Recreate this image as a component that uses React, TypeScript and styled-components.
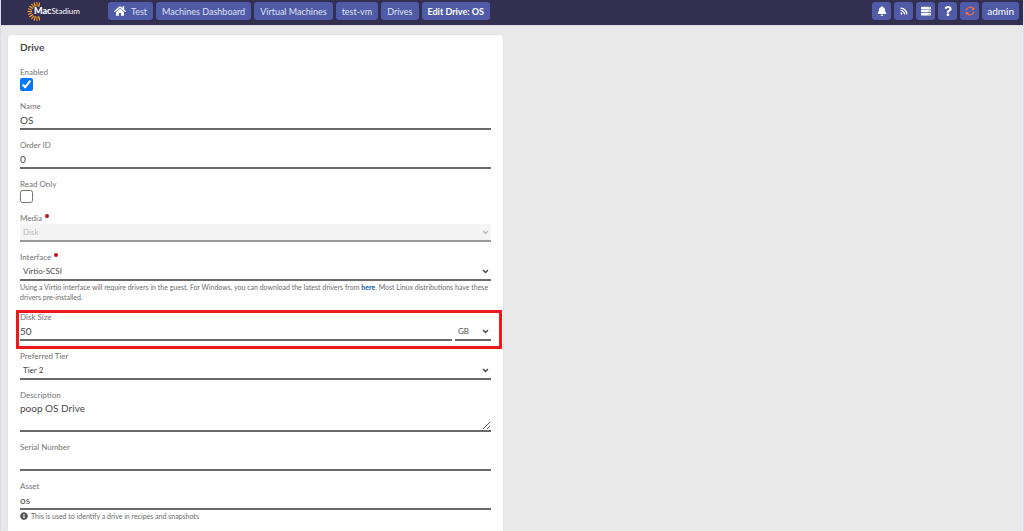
import React, { useId } from 'react';
import styled, { createGlobalStyle } from 'styled-components';
import { FaHome, FaBell, FaRss, FaServer, FaQuestion, FaInfoCircle } from 'react-icons/fa';

const GlobalStyle = createGlobalStyle`
  *, *::before, *::after { box-sizing: border-box; }
  body {
    margin: 0;
    background: #e9e9e9;
    color: #4a4a4a;
    font-family: Lato, "Noto Sans", sans-serif;
    font-size: 10px;
  }
  input, select, textarea, button { font: inherit; color: inherit; }
`;

const Page = styled.div`
  display: flex;
  flex-direction: column;
  min-height: 100vh;
  border: solid #d6dded;
  border-width: 0 1px;
`;

const Header = styled.header`
  display: flex;
  align-items: flex-start;
  gap: 29px;
  height: 26px;
  padding: 2px 4px 0 26px;
  background: #322f50;
  border-bottom: 1px solid #dddce4;
`;

const Logo = styled.a`
  display: flex;
  align-items: center;
  width: 52px;
  height: 18px;
  color: #fff;
  font-size: 8px;
  line-height: 18px;
  text-decoration: none;
  white-space: nowrap;

  svg { flex: none; margin-right: -6px; }
  b { font-size: 9px; font-weight: 900; }
`;

const Bar = styled.nav`
  display: flex;
  gap: 3px;
`;

const Tools = styled(Bar).attrs({ as: 'div' })`
  margin-left: auto;
`;

const Crumb = styled.a<{ $current?: boolean }>`
  display: flex;
  align-items: center;
  gap: 5px;
  height: 18px;
  padding: 0 6px;
  border-radius: 3px;
  background: #4f5ba6;
  color: ${(p) => (p.$current ? '#fff' : '#dfe2f4')};
  font-size: 9px;
  font-weight: ${(p) => (p.$current ? 700 : 400)};
  text-decoration: none;
  white-space: nowrap;

  svg { color: #fff; }
`;

const ToolButton = styled.button<{ $alert?: boolean; $icon?: boolean }>`
  display: flex;
  align-items: center;
  justify-content: center;
  width: ${(p) => (p.$icon ? '19px' : 'auto')};
  height: 18px;
  padding: ${(p) => (p.$icon ? '0' : '0 5px')};
  border: 0;
  border-radius: 3px;
  background: #4f5ba6;
  color: ${(p) => (p.$alert ? '#ee7048' : '#fff')};

  svg { flex: none; }
`;

const Main = styled.main`
  display: grid;
  grid-template-columns: 1fr 1fr;
  gap: 18px;
  flex: 1;
  padding: 9px 7px 0;
`;

const Card = styled.form`
  display: flex;
  flex-direction: column;
  gap: 9px;
  padding: 5px 12px 9px;
  border-radius: 3px 3px 0 0;
  background: #fff;
  box-shadow: 0 0 2px #d4d4d4;
`;

const Title = styled.h1`
  margin: 0 0 3px;
  font-size: 10px;
  line-height: 14px;
  font-weight: 700;
`;

const FieldBox = styled.div<{ $marked?: boolean }>`
  position: relative;
  display: flex;
  flex-direction: column;

  ${(p) => p.$marked && `
    &::after {
      content: '';
      position: absolute;
      inset: -1px -11px -8px -4px;
      border: 3px solid #ee161f;
      pointer-events: none;
    }
  `}
`;

const Label = styled.label<{ $required?: boolean }>`
  display: flex;
  gap: 3px;
  color: #737373;
  font-size: 8px;
  line-height: 12px;

  ${(p) => p.$required && `
    &::after {
      content: '';
      width: 4px;
      height: 4px;
      margin-top: 2px;
      border-radius: 2px;
      background: #cc0a14;
    }
  `}
`;

const TextInput = styled.input`
  width: 100%;
  min-width: 0;
  height: 18px;
  padding: 0 0 1px;
  border: 0;
  border-bottom: 2px solid #6a6a6a;
  border-radius: 0;
  background: none;
  outline: none;
`;

const TextArea = styled.textarea`
  display: block;
  height: 31px;
  padding: 0;
  border: 0;
  border-bottom: 2px solid #6a6a6a;
  background: none;
  line-height: 14px;
  outline: none;
  resize: vertical;
`;

const CheckInput = styled.input`
  width: 13px;
  height: 13px;
  margin: 0;
  accent-color: #0075ff;
`;

const SelectBox = styled.div<{ $narrow?: boolean }>`
  position: relative;
  flex: ${(p) => (p.$narrow ? '0 0 36px' : 'none')};

  svg {
    position: absolute;
    right: 2px;
    top: 6px;
    color: #444;
    pointer-events: none;
  }

  select:disabled + svg { color: #bbb; }
`;

const SelectInput = styled.select`
  display: block;
  appearance: none;
  width: 100%;
  height: 18px;
  padding: 0 10px 1px 3px;
  border: 0;
  border-bottom: 2px solid #6a6a6a;
  border-radius: 0;
  background: none;
  font-size: 8px;
  outline: none;

  &:disabled {
    background: #f4f4f4;
    border-color: #999;
    color: #bdbdbd;
    opacity: 1;
  }
`;

const Split = styled.div`
  display: flex;
  gap: 3px;
`;

const Help = styled.p`
  display: flex;
  gap: 3px;
  margin: 1px 0 0;
  color: #6c6c6c;
  font-size: 7px;
  line-height: 10px;

  a { color: #1459a8; font-weight: 700; text-decoration: none; }
  svg { flex: none; margin-top: 1px; color: #555; }
`;

const Sunburst = () => (
  <svg width="13" height="19" viewBox="0 0 13 19" fill="none" strokeWidth="1.2" aria-hidden="true">
    {[72, 90, 108, 126, 144, 162, 180, 198, 216, 234, 252, 270, 288].map((deg) => {
      const a = (deg * Math.PI) / 180;
      const x = Math.cos(a);
      const y = Math.sin(a);
      return (
        <line
          key={deg}
          x1={10 + x * 5}
          y1={9.5 - y * 5}
          x2={10 + x * 9.5}
          y2={9.5 - y * 9.5}
          stroke={deg % 36 === 0 ? '#f7a531' : '#ef8a22'}
        />
      );
    })}
  </svg>
);

const Refresh = () => (
  <svg width="10" height="10" viewBox="0 0 10 10" fill="none" stroke="currentColor" strokeWidth="1.2" aria-hidden="true">
    <path d="M1.2 4.4A3.9 3.9 0 0 1 8.2 2.8M8.8 5.6A3.9 3.9 0 0 1 1.8 7.2" />
    <path d="M9.4 .8V4H6.2zM.6 9.2V6H3.8z" fill="currentColor" stroke="none" />
  </svg>
);

const Chevron = () => (
  <svg width="7" height="5" viewBox="0 0 7 5" fill="none" stroke="currentColor" strokeWidth="1.4" aria-hidden="true">
    <path d="M1 1l2.5 2.5L6 1" />
  </svg>
);

type FieldProps = {
  label: string;
  required?: boolean;
  marked?: boolean;
  help?: React.ReactNode;
  children: (id: string) => React.ReactNode;
};

const Field = ({ label, required, marked, help, children }: FieldProps) => {
  const id = useId();
  return (
    <FieldBox $marked={marked}>
      <Label htmlFor={id} $required={required}>{label}</Label>
      {children(id)}
      {help && <Help>{help}</Help>}
    </FieldBox>
  );
};

type SelectProps = { id?: string; value: string; disabled?: boolean; narrow?: boolean; title?: string };

const Select = ({ id, value, disabled, narrow, title }: SelectProps) => (
  <SelectBox $narrow={narrow}>
    <SelectInput id={id} disabled={disabled} aria-label={title}>
      <option>{value}</option>
    </SelectInput>
    <Chevron />
  </SelectBox>
);

export default function App() {
  return (
    <Page>
      <GlobalStyle />
      <Header>
        <Logo href="#"><Sunburst /><b>Mac</b>Stadium</Logo>
        <Bar>
          <Crumb href="#"><FaHome size={12} />Test</Crumb>
          <Crumb href="#">Machines Dashboard</Crumb>
          <Crumb href="#">Virtual Machines</Crumb>
          <Crumb href="#">test-vm</Crumb>
          <Crumb href="#">Drives</Crumb>
          <Crumb href="#" $current>Edit Drive: OS</Crumb>
        </Bar>
        <Tools>
          <ToolButton $icon aria-label="Notifications"><FaBell size={10} /></ToolButton>
          <ToolButton $icon aria-label="Feed"><FaRss size={8} /></ToolButton>
          <ToolButton $icon aria-label="Servers"><FaServer size={10} /></ToolButton>
          <ToolButton $icon aria-label="Help"><FaQuestion size={10} /></ToolButton>
          <ToolButton $icon $alert aria-label="Refresh"><Refresh /></ToolButton>
          <ToolButton>admin</ToolButton>
        </Tools>
      </Header>
      <Main>
        <Card>
          <Title>Drive</Title>
          <Field label="Enabled">{(id) => <CheckInput id={id} type="checkbox" defaultChecked />}</Field>
          <Field label="Name">{(id) => <TextInput id={id} defaultValue="OS" />}</Field>
          <Field label="Order ID">{(id) => <TextInput id={id} defaultValue="0" />}</Field>
          <Field label="Read Only">{(id) => <CheckInput id={id} type="checkbox" />}</Field>
          <Field label="Media" required>{(id) => <Select id={id} value="Disk" disabled />}</Field>
          <Field
            label="Interface"
            required
            help={
              <span>
                Using a Virtio interface will require drivers in the guest. For Windows, you can download the latest
                drivers from <a href="#">here</a>. Most Linux distributions have these drivers pre-installed.
              </span>
            }
          >
            {(id) => <Select id={id} value="Virtio-SCSI" />}
          </Field>
          <Field label="Disk Size" marked>
            {(id) => (
              <Split>
                <TextInput id={id} defaultValue="50" />
                <Select value="GB" narrow title="Disk size unit" />
              </Split>
            )}
          </Field>
          <Field label="Preferred Tier">{(id) => <Select id={id} value="Tier 2" />}</Field>
          <Field label="Description">{(id) => <TextArea id={id} defaultValue="poop OS Drive" />}</Field>
          <Field label="Serial Number">{(id) => <TextInput id={id} />}</Field>
          <Field label="Asset" help={<><FaInfoCircle size={8} />This is used to identify a drive in recipes and snapshots</>}>
            {(id) => <TextInput id={id} defaultValue="os" />}
          </Field>
        </Card>
      </Main>
    </Page>
  );
}
